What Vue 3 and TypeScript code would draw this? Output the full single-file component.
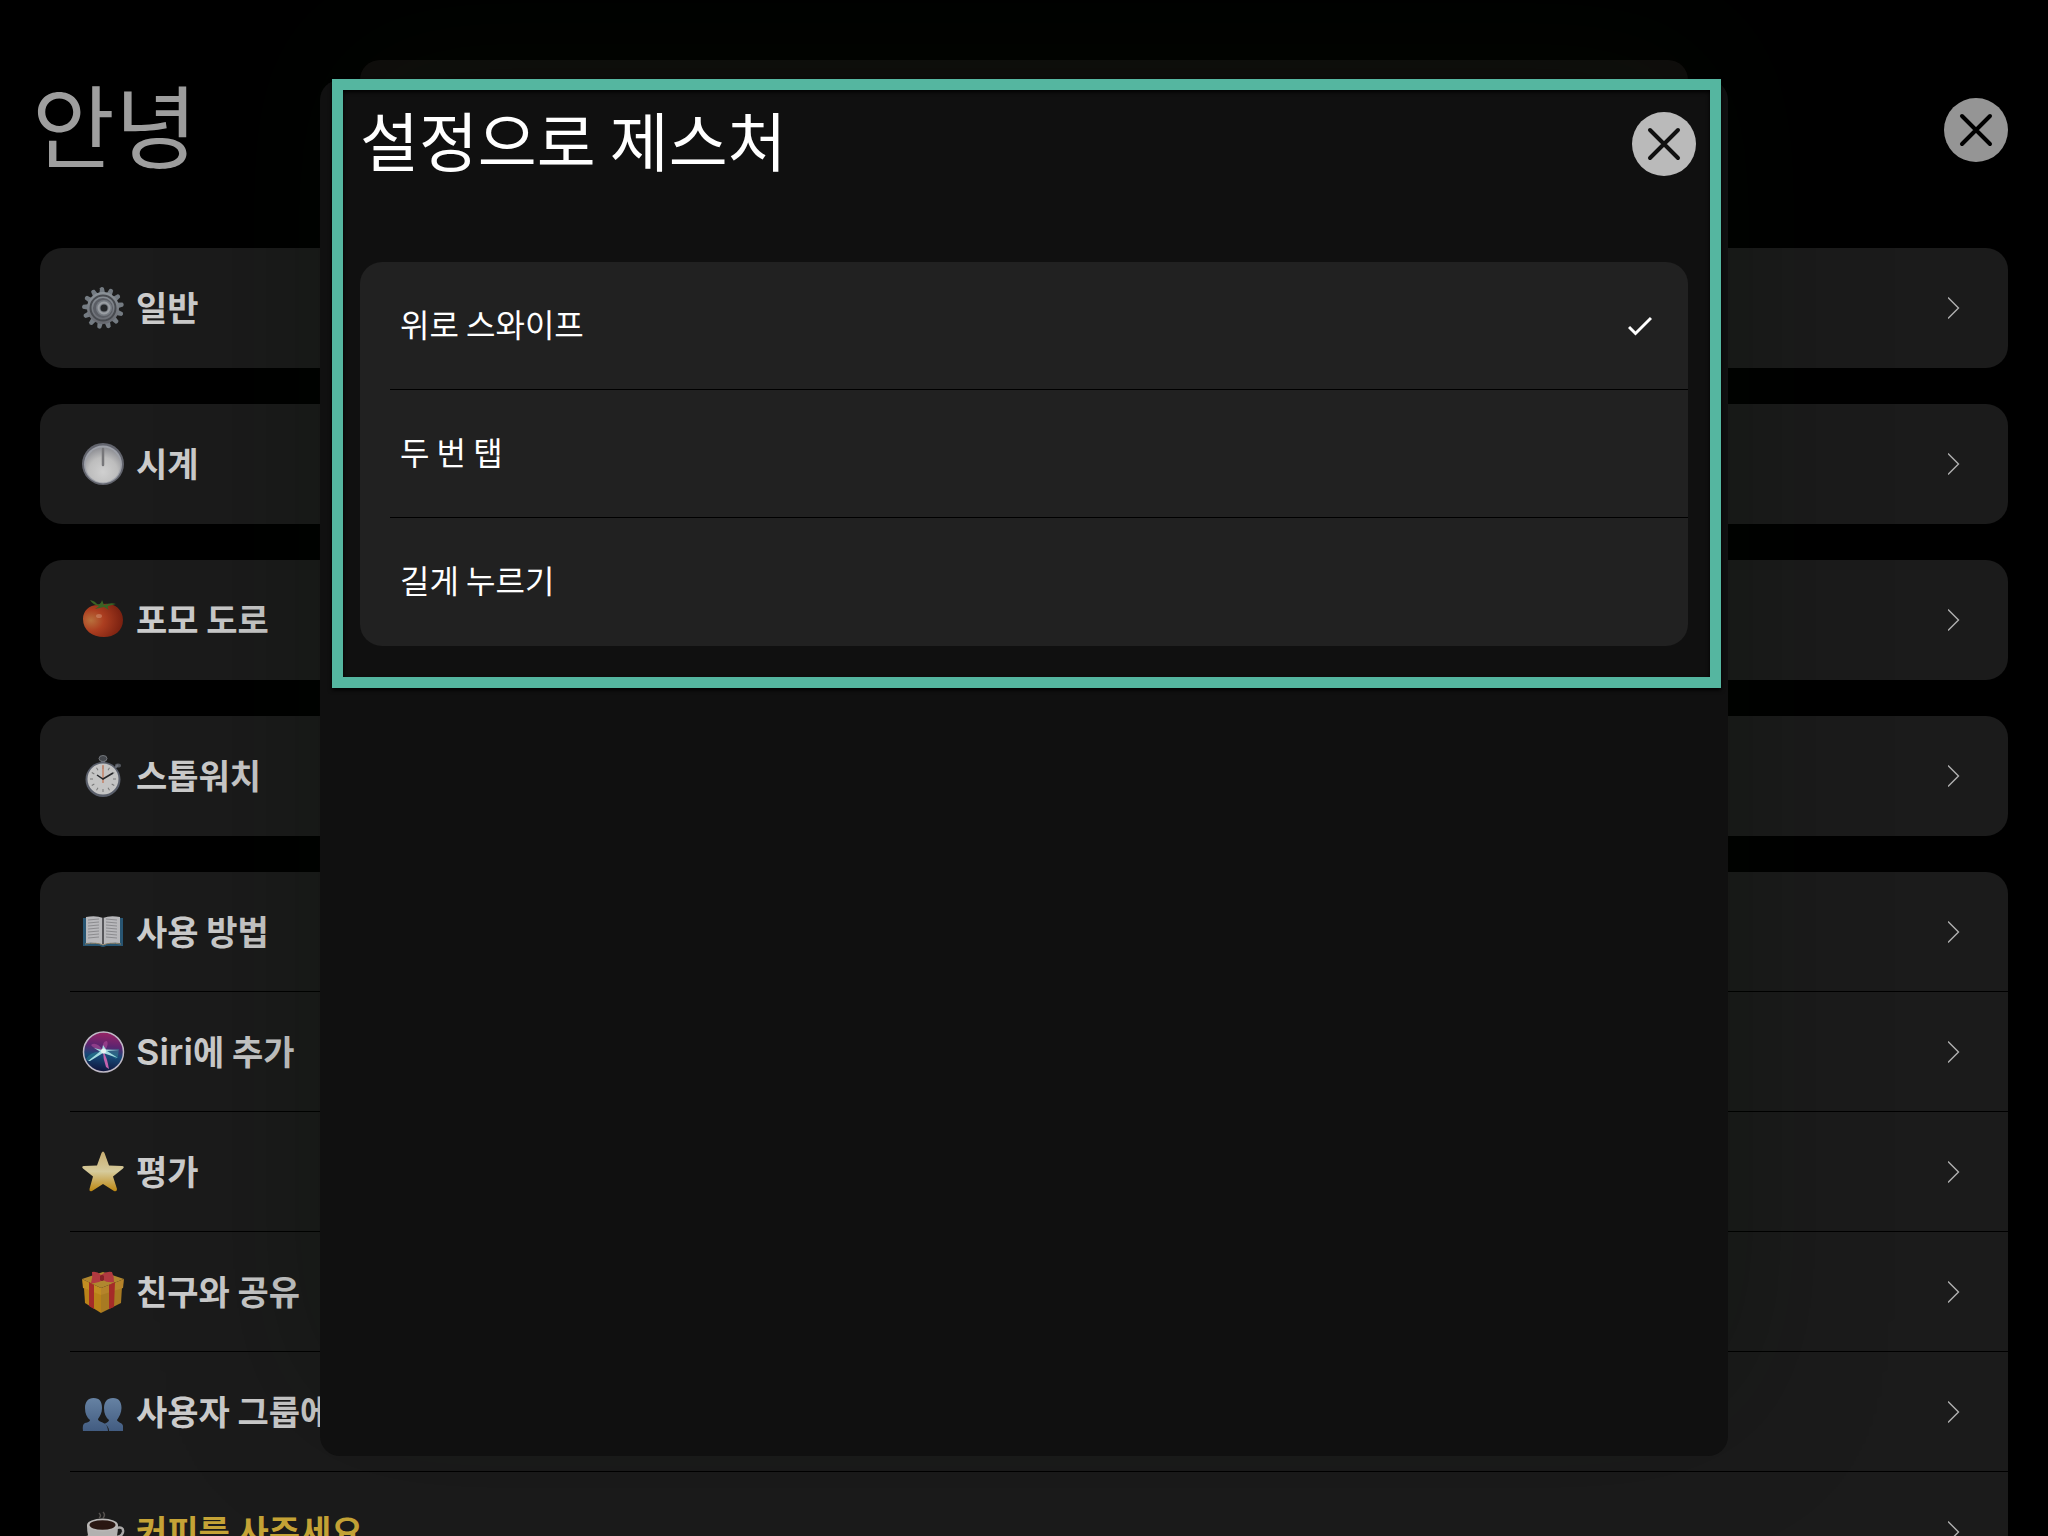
<script setup lang="ts">
import { ref } from 'vue'

interface MenuItem {
  icon: string
  latin?: string
  label: string
  accent?: boolean
}

const groups: MenuItem[][] = [
  [{ icon: 'gear', label: '일반' }],
  [{ icon: 'clock', label: '시계' }],
  [{ icon: 'tomato', label: '포모 도로' }],
  [{ icon: 'stopwatch', label: '스톱워치' }],
  [
    { icon: 'book', label: '사용 방법' },
    { icon: 'siri', latin: 'Siri', label: '에 추가' },
    { icon: 'star', label: '평가' },
    { icon: 'gift', label: '친구와 공유' },
    { icon: 'people', label: '사용자 그룹에 가입' },
    { icon: 'coffee', label: '커피를 사주세요', accent: true },
  ],
]

const gestures = ['위로 스와이프', '두 번 탭', '길게 누르기']
const selected = ref(gestures[0])

const teeth = Array.from({ length: 13 }, (_, i) => (i * 360) / 13 - 3)
const hours = Array.from({ length: 12 }, (_, i) => i * 30)
const lines = [5, 8, 11, 14, 17, 20, 23]
</script>

<template>
  <main class="page">
    <header class="page-head">
      <h1 class="page-title">안녕</h1>
      <button class="close dim" type="button" aria-label="닫기">
        <svg viewBox="0 0 64 64" aria-hidden="true"><path d="M18 18 46 46M46 18 18 46" /></svg>
      </button>
    </header>

    <nav class="groups">
      <ul v-for="(group, g) in groups" :key="g" class="card">
        <li v-for="item in group" :key="item.label" class="row">
          <a class="row-link" :class="{ accent: item.accent }" href="#">
            <svg class="icon" viewBox="0 0 42 42" aria-hidden="true">
              <defs>
                <linearGradient id="steel" x1="0" y1="0" x2="0" y2="1"><stop offset="0" stop-color="#8c9399" /><stop offset="1" stop-color="#66686f" /></linearGradient>
                <radialGradient id="dial" cx=".5" cy=".7" r=".75"><stop offset="0" stop-color="#d0d0d0" /><stop offset=".55" stop-color="#bdbdbd" /><stop offset="1" stop-color="#85868c" /></radialGradient>
                <radialGradient id="red" cx=".2" cy=".5" r=".8"><stop offset="0" stop-color="#b8703c" /><stop offset=".4" stop-color="#ac3e20" /><stop offset="1" stop-color="#782010" /></radialGradient>
                <linearGradient id="gold" x1="0" y1="0" x2="0" y2="1"><stop offset="0" stop-color="#c8ad70" /><stop offset=".5" stop-color="#d6cb9c" /><stop offset="1" stop-color="#bd8711" /></linearGradient>
                <linearGradient id="orb" x1=".55" y1="0" x2=".45" y2="1"><stop offset="0" stop-color="#9a2464" /><stop offset=".35" stop-color="#5c2470" /><stop offset=".6" stop-color="#174a78" /><stop offset="1" stop-color="#10123a" /></linearGradient>
                <linearGradient id="blue" x1="0" y1="0" x2="0" y2="1"><stop offset="0" stop-color="#6682a3" /><stop offset="1" stop-color="#425c81" /></linearGradient>
              </defs>

              <g v-if="item.icon === 'gear'">
                <path v-for="t in teeth" :key="t" :transform="`rotate(${t} 21 21)`" d="M18 8 19 1Q21 -1 23 1L24 8Z" fill="#747b82" />
                <circle cx="21" cy="21" r="16" fill="url(#steel)" />
                <circle cx="21" cy="21" r="12.500" fill="none" stroke="#484b50" stroke-width="2" />
                <circle cx="21" cy="21" r="10" fill="#5b5e65" />
                <circle cx="22" cy="21" r="8" fill="#777c83" />
                <circle cx="22" cy="21" r="5.500" fill="none" stroke="#9a9ea3" stroke-width="2" />
                <circle cx="22" cy="21" r="3.500" fill="#26282b" />
              </g>

              <g v-else-if="item.icon === 'clock'">
                <circle cx="21" cy="21" r="21" fill="#62646d" />
                <circle cx="21" cy="21.500" r="19" fill="#9da0a8" />
                <circle cx="21" cy="22" r="17.500" fill="url(#dial)" />
                <path d="M21 6V22" stroke="#77777a" stroke-width="2.500" stroke-linecap="round" />
              </g>

              <g v-else-if="item.icon === 'tomato'">
                <path d="M18 6C27 2 41 7 41 21 41 32 32 38 22 38 10 38 1 31 1 20 1 11 8 5 18 6Z" fill="url(#red)" />
                <ellipse cx="17" cy="17" rx="3" ry="2" fill="#d59879" opacity=".5" />
                <path d="M8 1Q13 2 15 5 19 6 20 1L22 6Q29 3 34 5L26 7Q25 9 27 11L22 8 13 10 17 7Q11 6 8 1Z" fill="#3a6324" />
              </g>

              <g v-else-if="item.icon === 'stopwatch'">
                <ellipse cx="21" cy="3.500" rx="4" ry="3" fill="#44474c" stroke="#72767b" />
                <path d="M19 6h4v4h-4z" fill="#6c7079" />
                <ellipse cx="36" cy="10.500" rx="3" ry="2" fill="#53575e" />
                <path d="M33 13l3-3" stroke="#6b6f78" stroke-width="2" />
                <circle cx="21" cy="24.500" r="17.500" fill="#5a5f6b" />
                <circle cx="21" cy="24" r="15.500" fill="#c4c4c4" />
                <path v-for="h in hours" :key="h" :transform="`rotate(${h} 21 24)`" d="M21 11v3" stroke="#787878" stroke-width="1" />
                <path d="M21 10v18" stroke="#c58368" stroke-width="1.500" />
                <path d="M15 20 21 24 31 18" fill="none" stroke="#27282b" stroke-width="1.500" />
              </g>

              <g v-else-if="item.icon === 'book'">
                <path d="M1 7h40v28H24q-3 2-6 0H1Z" fill="#285572" />
                <path d="M4 32V6Q14 4 21 7 28 4 38 6V32Q28 31 21 34 14 31 4 32Z" fill="#b8b8bb" />
                <path d="M20 7h2v26h-2z" fill="#56565a" />
                <g stroke="#8b8b8f" stroke-width="1">
                  <path v-for="l in lines" :key="l" :d="`M6 ${l + 4}l11 -1M24 ${l + 3}l11 1`" />
                </g>
                <path d="M3 33Q15 31 21 34 27 31 39 33" fill="none" stroke="#8d8067" />
              </g>

              <g v-else-if="item.icon === 'siri'">
                <circle cx="21.500" cy="21" r="20" fill="url(#orb)" stroke="#bfb9c6" stroke-width="1.500" />
                <path d="M21 19Q14 10 9 14 12 18 21 20ZM21 18Q20 10 25 10 27 14 23 19Z" fill="#b24c99" opacity=".6" />
                <path d="M19 20Q8 21 4 28 7 31 8 30ZM23 20 37 18 36 25 34 28Z" fill="#2a8b96" opacity=".5" />
                <path d="M21 20Q25 26 27 38L24 36Q21 28 21 20Z" fill="#c462ad" />
                <path d="M20 19 12 17 18 20.500 6 30 8 30 21 22 36 27 25 20 37 19 24 18.500 21 14Z" fill="#a3dbe0" />
                <circle cx="21.500" cy="20" r="2.500" fill="#e5f4f3" />
              </g>

              <path v-else-if="item.icon === 'star'" d="M19.500 2Q21 -1 22.500 2L27 14.500 40 15Q43 15.500 41 17.500L31 25.500 35 38Q35 41 32 40L21 33 10 40Q7 41 7.500 38L11 25.500 1 17.500Q-1 15.500 2 15L15 14.500Z" fill="url(#gold)" />

              <g v-else-if="item.icon === 'gift'">
                <path d="M2 17 19 23V42L3 32Z" fill="#b98219" />
                <path d="M19 23 40 16 39 32 19 42Z" fill="#a87a22" />
                <path d="M0 8 21 1 42 8 19 17Z" fill="#b0872f" />
                <path d="M0 8 19 17V24L1 17Z" fill="#c28d22" />
                <path d="M19 17 42 8 41 17 19 24Z" fill="#b5832a" />
                <path d="M7 11 12 14V38L7 35ZM27 14 33 11 32 36 27 38Z" fill="#a52b28" />
                <path d="M10 1Q15 0 19 4 24 0 30 1 32 5 32 11 25 12 21 9 15 13 9 12 11 6 10 1Z" fill="#b13a40" />
                <path d="M18 5Q20 3 22 5V9Q20 11 18 9Z" fill="#852126" />
              </g>

              <g v-else-if="item.icon === 'people'" fill="url(#blue)">
                <path d="M11.500 7C18 7 20 11 20 17 20 22 18 25 16 28 16 32 26 30 26 40H1Q0 33 3 32 8 31 8 29 3 25 3 17C3 11 6 7 11.500 7Z" />
                <path d="M31 7C37 7 39.500 11 39.500 17 39.500 22 37 26 35 29 35 31 41 32 41 35V40H27Q27 35 22 33 27 31 27 29 22 25 22 17C22 11 25 7 31 7Z" />
              </g>

              <g v-else>
                <path d="M17 7Q20 5 17 2M21 7Q24 4 21 1" fill="none" stroke="#55514e" stroke-width="1.500" />
                <ellipse cx="20" cy="30" rx="20" ry="8" fill="#83817f" />
                <path d="M34 17Q42 15 41 21 40 26 33 26" fill="none" stroke="#aaa8a7" stroke-width="2.500" />
                <path d="M5 14H36Q36 35 25 35H16Q5 34 5 14Z" fill="#b3b1b0" />
                <ellipse cx="20.500" cy="14" rx="15.500" ry="6.500" fill="#b9b7b6" />
                <ellipse cx="20.500" cy="14" rx="13" ry="4.800" fill="#2a1712" />
              </g>
            </svg>
            <span class="row-label"><span v-if="item.latin" class="latin">{{ item.latin }}</span>{{ item.label }}</span>
            <svg class="chevron" viewBox="0 0 12 24" aria-hidden="true"><path d="M0 1.500 10.500 12 0 22.500" /></svg>
          </a>
        </li>
      </ul>
    </nav>

    <div class="overlay">
      <section class="sheet" role="dialog" aria-labelledby="sheet-title">
        <div class="spotlight">
          <header class="sheet-head">
            <h2 id="sheet-title" class="sheet-title">설정으로 제스처</h2>
            <button class="close" type="button" aria-label="닫기">
              <svg viewBox="0 0 64 64" aria-hidden="true"><path d="M18 18 46 46M46 18 18 46" /></svg>
            </button>
          </header>
          <div class="options" role="radiogroup" aria-labelledby="sheet-title">
            <label v-for="name in gestures" :key="name" class="option">
              <span class="option-label">{{ name }}</span>
              <input v-model="selected" class="option-input" type="radio" name="gesture" :value="name" />
              <svg v-if="selected === name" class="check" viewBox="0 0 24 20" aria-hidden="true"><path d="M1 11 7.500 17.500 23 2" /></svg>
            </label>
          </div>
        </div>
      </section>
    </div>
  </main>
</template>

<style>
body {
  margin: 0;
  background: #000;
}
</style>

<style scoped>
.page {
  position: relative;
  height: 100vh;
  overflow: hidden;
  background: #000;
  color: #cbcbcb;
  font-family: 'Noto Sans CJK KR', sans-serif;
}

.page-head {
  display: flex;
  align-items: center;
  justify-content: space-between;
  height: 128px;
  padding: 66px 40px 54px 32px;
}

.page-title {
  margin: 0;
  padding-bottom: 16px;
  color: #9e9e9e;
  font-size: 90px;
  font-weight: 400;
  line-height: 112px;
}

.close {
  width: 64px;
  height: 64px;
  padding: 0;
  border: 0;
  border-radius: 50%;
  background: #bababa;
  color: #101010;
}

.close.dim {
  background: #959595;
  color: #000;
}

.close svg {
  display: block;
  fill: none;
  stroke: currentColor;
  stroke-width: 4;
  stroke-linecap: round;
}

.groups {
  display: flex;
  flex-direction: column;
  gap: 36px;
  padding: 0 40px;
}

.card {
  margin: 0;
  padding: 0;
  border-radius: 22px;
  background: #1b1b1b;
  list-style: none;
}

.row {
  padding-left: 30px;
}

.row-link {
  display: flex;
  align-items: center;
  box-sizing: border-box;
  height: 120px;
  padding: 0 48px 0 12px;
  color: inherit;
  text-decoration: none;
}

.row + .row .row-link {
  box-shadow: 0 -1px #000;
}

.row-link.accent {
  color: #c5a336;
}

.icon {
  flex: none;
  width: 42px;
  height: 42px;
  margin-right: 12px;
  overflow: visible;
}

.row-label {
  flex: 1;
  padding-bottom: 2px;
  font-size: 34px;
  font-weight: 600;
  line-height: 48px;
}

.latin {
  font-family: Inter, sans-serif;
  font-size: 36px;
  line-height: 1;
}

.chevron {
  width: 12px;
  height: 24px;
  fill: none;
  stroke: #b0b0b0;
  stroke-width: 1.4;
}

.overlay {
  position: absolute;
  z-index: 1;
  inset: 80px 0;
  display: flex;
  justify-content: center;
}

.sheet {
  position: relative;
  width: 68.75%;
  border-radius: 20px;
  background: #101010;
  box-shadow: 0 -56px 160px rgba(8, 16, 0, 0.3);
  color: #fff;
}

/* Edge of the sheet stacked behind this one */
.sheet::before {
  content: '';
  position: absolute;
  z-index: -1;
  inset: -20px 40px auto;
  height: 60px;
  border-radius: 20px;
  background: #100e0e;
}

.spotlight {
  position: relative;
  padding: 0 40px;
}

.spotlight::after {
  content: '';
  position: absolute;
  inset: -1px 7px -42px 12px;
  border: 11px solid #55b6a0;
  filter: drop-shadow(0 2px 2px #000);
  pointer-events: none;
}

.sheet-head {
  display: flex;
  align-items: center;
  justify-content: space-between;
  height: 128px;
  margin: 0 -8px 54px 0;
}

.sheet-title {
  margin: 0;
  padding-bottom: 12px;
  font-size: 64px;
  font-weight: 400;
  line-height: 96px;
}

.options {
  overflow: hidden;
  border-radius: 22px;
  background: #212121;
}

.option {
  display: flex;
  align-items: center;
  justify-content: space-between;
  position: relative;
  height: 128px;
  margin-left: 30px;
  padding: 0 36px 0 10px;
  font-size: 32px;
  line-height: 48px;
}

.option + .option {
  box-shadow: 0 -1px #000;
}

.option-label {
  padding-bottom: 6px;
}

.option-input {
  position: absolute;
  inset: 0;
  margin: 0;
  opacity: 0;
}

.check {
  width: 24px;
  height: 20px;
  fill: none;
  stroke: #fff;
  stroke-width: 3;
}
</style>
